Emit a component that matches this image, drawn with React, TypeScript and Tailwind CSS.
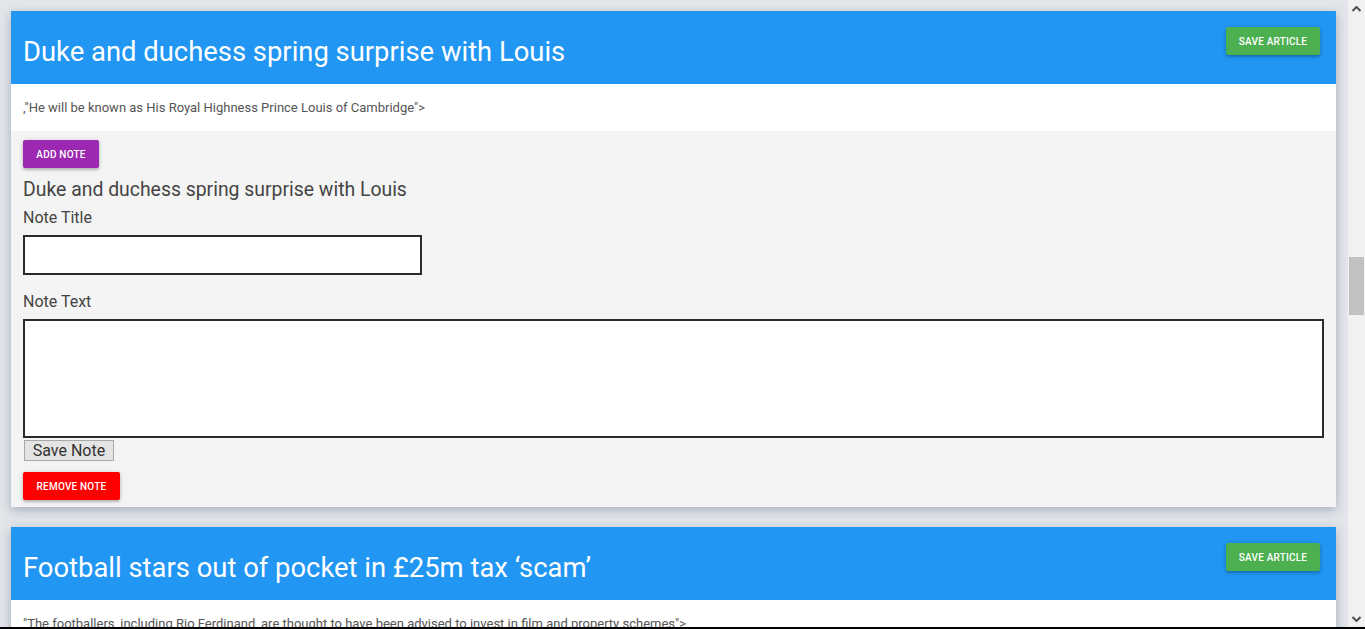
import React from 'react'

type Article = {
  title: string
  summary: string
  withNote?: boolean
}

const articles: Article[] = [
  {
    title: 'Duke and duchess spring surprise with Louis',
    summary: ',"He will be known as His Royal Highness Prince Louis of Cambridge">',
    withNote: true,
  },
  {
    title: 'Football stars out of pocket in £25m tax ‘scam’',
    summary:
      '"The footballers, including Rio Ferdinand, are thought to have been advised to invest in film and property schemes">',
  },
]

const btnShadow = 'shadow-[0_2px_2px_rgba(0,0,0,0.14),0_1px_5px_rgba(0,0,0,0.2)]'

const NoteForm = ({ title }: { title: string }) => (
  <div className="bg-[#f4f4f4] px-[12px] pt-[9px] pb-[7px] flex flex-col items-start">
    <button
      className={`w-[76px] h-[28px] rounded-[2px] bg-[#9c27b0] text-white text-[10px] font-medium tracking-[0.2px] uppercase ${btnShadow}`}
    >
      Add Note
    </button>
    <h4 className="mt-[10px] text-[19.4px] leading-[24px] text-[#444]">{title}</h4>
    <label className="mt-[4px] text-[16px] leading-[24px] text-[#444]">Note Title</label>
    <input className="mt-[5px] w-[399px] h-[40px] bg-white border-2 border-[#2b2b2b] outline-none" />
    <label className="mt-[15px] text-[16px] leading-[24px] text-[#444]">Note Text</label>
    <textarea className="mt-[5px] w-full h-[119px] bg-white border-2 border-[#2b2b2b] outline-none resize-none" />
    <button className="mt-[2px] ml-[1px] w-[90px] h-[21px] bg-[#e4e4e4] border border-[#a9a9a9] text-[16px] leading-[18px] text-[#333]">
      Save Note
    </button>
    <button
      className={`mt-[11px] w-[97px] h-[28px] rounded-[2px] bg-[#ff0000] text-white text-[10px] font-medium tracking-[0.2px] uppercase ${btnShadow}`}
    >
      Remove Note
    </button>
  </div>
)

const ArticleCard = ({ article }: { article: Article }) => (
  <div className="bg-white shadow-[0_3px_10px_rgba(110,128,150,0.55)] shrink-0">
    <div className="h-[73px] bg-[#2196f3] flex items-start justify-between pl-[12px] pr-[16px]">
      <h2 className="pt-[25px] text-[27.4px] leading-[32px] text-white">{article.title}</h2>
      <button
        className={`mt-[16px] w-[94px] h-[28px] rounded-[2px] bg-[#4caf50] text-white text-[10px] font-medium tracking-[0.2px] uppercase ${btnShadow}`}
      >
        Save Article
      </button>
    </div>
    <div className="h-[47px] flex items-center px-[12px]">
      <p className="text-[13px] text-[#555]">{article.summary}</p>
    </div>
    {article.withNote && <NoteForm title={article.title} />}
  </div>
)

const Scrollbar = () => (
  <div className="w-[17px] bg-[#f1f1f1] flex flex-col items-center">
    <div className="h-[17px] flex items-center justify-center">
      <svg width="9" height="6" viewBox="0 0 9 6">
        <path d="M0.5 5 L4.5 1 L8.5 5" fill="none" stroke="#505050" strokeWidth="2" />
      </svg>
    </div>
    <div className="flex-1 w-full px-[1px]">
      <div className="mt-[240px] h-[58px] bg-[#c1c1c1]" />
    </div>
    <div className="h-[17px] flex items-center justify-center">
      <svg width="9" height="6" viewBox="0 0 9 6">
        <path d="M0.5 1 L4.5 5 L8.5 1" fill="none" stroke="#505050" strokeWidth="2" />
      </svg>
    </div>
  </div>
)

export default function App() {
  return (
    <div
      className="h-[629px] w-full overflow-hidden flex flex-col"
      style={{ fontFamily: 'Roboto, "Noto Sans", sans-serif' }}
    >
      <div className="h-[627px] flex">
        <div className="flex-1 overflow-hidden bg-[#e3e6ea] pt-[11px] pl-[11px] pr-[12px] flex flex-col gap-[20px]">
          {articles.map((a, i) => (
            <ArticleCard key={i} article={a} />
          ))}
        </div>
        <Scrollbar />
      </div>
      <div className="h-[2px] bg-black" />
    </div>
  )
}
